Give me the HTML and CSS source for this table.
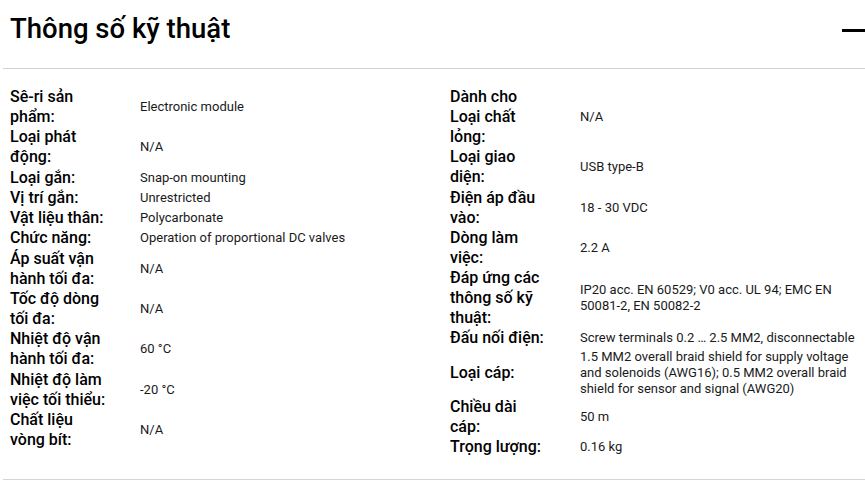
FILE: index.html
```html
<!DOCTYPE html>
<html lang="vi">
<head>
<meta charset="utf-8">
<title>Thông số kỹ thuật</title>
<link rel="stylesheet" href="styles.css">
</head>
<body>
<section class="specs">
  <header class="specs-head">
    <h2 class="specs-title">Thông số kỹ thuật</h2>
    <span class="collapse-icon" aria-hidden="true"></span>
  </header>
  <div class="specs-body">
    <dl class="spec-list">
      <div class="spec-row"><dt>Sê-ri sản phẩm:</dt><dd>Electronic module</dd></div>
      <div class="spec-row"><dt>Loại phát động:</dt><dd>N/A</dd></div>
      <div class="spec-row"><dt>Loại gắn:</dt><dd>Snap-on mounting</dd></div>
      <div class="spec-row"><dt>Vị trí gắn:</dt><dd>Unrestricted</dd></div>
      <div class="spec-row"><dt>Vật liệu thân:</dt><dd>Polycarbonate</dd></div>
      <div class="spec-row"><dt>Chức năng:</dt><dd>Operation of proportional DC valves</dd></div>
      <div class="spec-row"><dt>Áp suất vận hành tối đa:</dt><dd>N/A</dd></div>
      <div class="spec-row"><dt>Tốc độ dòng tối đa:</dt><dd>N/A</dd></div>
      <div class="spec-row"><dt>Nhiệt độ vận hành tối đa:</dt><dd>60 °C</dd></div>
      <div class="spec-row"><dt>Nhiệt độ làm việc tối thiểu:</dt><dd>-20 °C</dd></div>
      <div class="spec-row"><dt>Chất liệu vòng bít:</dt><dd>N/A</dd></div>
    </dl>
    <dl class="spec-list">
      <div class="spec-row"><dt>Dành cho Loại chất lỏng:</dt><dd>N/A</dd></div>
      <div class="spec-row"><dt>Loại giao diện:</dt><dd>USB type-B</dd></div>
      <div class="spec-row"><dt>Điện áp đầu vào:</dt><dd>18 - 30 VDC</dd></div>
      <div class="spec-row"><dt>Dòng làm việc:</dt><dd>2.2 A</dd></div>
      <div class="spec-row"><dt>Đáp ứng các thông số kỹ thuật:</dt><dd>IP20 acc. EN 60529; V0 acc. UL 94; EMC EN 50081-2, EN 50082-2</dd></div>
      <div class="spec-row"><dt>Đấu nối điện:</dt><dd>Screw terminals 0.2 … 2.5 MM2, disconnectable</dd></div>
      <div class="spec-row"><dt>Loại cáp:</dt><dd>1.5 MM2 overall braid shield for supply voltage and solenoids (AWG16); 0.5 MM2 overall braid shield for sensor and signal (AWG20)</dd></div>
      <div class="spec-row"><dt>Chiều dài cáp:</dt><dd>50 m</dd></div>
      <div class="spec-row"><dt>Trọng lượng:</dt><dd>0.16 kg</dd></div>
    </dl>
  </div>
</section>
</body>
</html>
```

FILE: styles.css
```css
html, body {
  margin: 0;
  padding: 0;
  background: #ffffff;
  overflow: hidden;
}
body {
  font-family: Roboto, "Noto Sans", "Liberation Sans", sans-serif;
  color: #000000;
  width: 865px;
}
.specs {
  margin-left: 3px;
  border-bottom: 1px solid #d2d6dc;
}
.specs-head {
  height: 69px;
  border-bottom: 1px solid #d2d2d6;
  display: flex;
  align-items: flex-start;
  justify-content: space-between;
  padding-left: 7px;
  box-sizing: border-box;
}
.specs-title {
  margin: 0;
  padding-top: 13px;
  font-size: 27.5px;
  line-height: 32px;
  font-weight: 500;
  letter-spacing: 0;
}
.collapse-icon {
  display: block;
  width: 23px;
  height: 3px;
  background: #000;
  margin-top: 29px;
}
.specs-body {
  display: grid;
  grid-template-columns: 430px 1fr;
  column-gap: 10px;
  padding: 18px 0 22px 7px;
}
.spec-list {
  margin: 0;
  display: flex;
  flex-direction: column;
  gap: 0.3px;
}
.spec-row {
  display: grid;
  grid-template-columns: 130px 1fr;
  align-items: center;
}
.spec-row dt {
  font-size: 16px;
  line-height: 20px;
  font-weight: 500;
  padding-right: 32px;
}
.spec-row dd {
  margin: 0;
  font-size: 13px;
  line-height: 16px;
  color: #1a1a1a;
}
```
